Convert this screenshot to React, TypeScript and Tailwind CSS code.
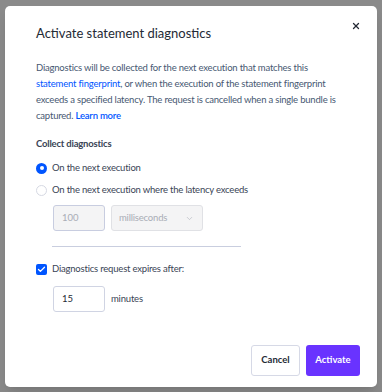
import { ChevronDown, X, Check } from "lucide-react";

export default function App() {
  return (
    <div
      className="w-[382px] h-[392px] bg-[#8a8a8a] pt-[6px] pl-[5px]"
      style={{ fontFamily: "Lato, 'Noto Sans', sans-serif" }}
    >
      <div className="relative w-[372px] h-[381px] bg-white rounded-[5px] shadow-lg pt-[18px] px-[31px] flex flex-col">
        {/* close */}
        <button className="absolute right-[16px] top-[15px] text-[#242a35]">
          <X size={10} strokeWidth={3} />
        </button>

        <h2 className="text-[13px] leading-[18px] text-[#242a35]">Activate statement diagnostics</h2>

        <p className="mt-[18px] text-[9.5px] tracking-[-0.2px] leading-[16px] text-[#475872]">
          Diagnostics will be collected for the next execution that matches this{" "}
          <span className="text-[#0055ff]">statement fingerprint</span>, or when the execution of the statement
          fingerprint exceeds a specified latency. The request is cancelled when a single bundle is captured.{" "}
          <span className="text-[#0055ff] font-semibold">Learn more</span>
        </p>

        <div className="mt-[12px] text-[9.5px] tracking-[-0.2px] leading-[16px] font-bold text-[#394455]">
          Collect diagnostics
        </div>

        <div className="mt-[8px] flex items-center gap-[5px] h-[16px]">
          <span className="w-[11px] h-[11px] rounded-full bg-[#0055ff] flex items-center justify-center">
            <span className="w-[4px] h-[4px] rounded-full bg-white" />
          </span>
          <span className="text-[9.5px] tracking-[-0.2px] text-[#394455]">On the next execution</span>
        </div>

        <div className="mt-[6px] flex items-center gap-[5px] h-[16px]">
          <span className="w-[11px] h-[11px] rounded-full border border-[#d6d9e3] bg-white" />
          <span className="text-[9.5px] tracking-[-0.2px] text-[#394455]">
            On the next execution where the latency exceeds
          </span>
        </div>

        <div className="ml-[17px] mt-[7px] flex gap-[6px]">
          <div className="w-[52px] h-[26px] rounded-[3px] border border-[#c8cde0] bg-[#f4f4f5] flex items-center px-[8px] text-[9.5px] text-[#a9adb5]">
            100
          </div>
          <div className="w-[92px] h-[26px] rounded-[3px] border border-[#e0e1e5] bg-[#f4f4f5] flex items-center justify-between pl-[7px] pr-[8px] text-[9.5px] tracking-[-0.2px] text-[#a9adb5]">
            <span>milliseconds</span>
            <ChevronDown size={9} strokeWidth={1.5} />
          </div>
        </div>

        <div className="ml-[16px] mt-[15px] w-[189px] h-px bg-[#c9cedf]" />

        <div className="mt-[14px] flex items-center gap-[5px] h-[16px]">
          <span className="w-[11px] h-[11px] rounded-[2px] bg-[#0055ff] flex items-center justify-center text-white">
            <Check size={9} strokeWidth={3.5} />
          </span>
          <span className="text-[9.5px] tracking-[-0.2px] text-[#394455]">Diagnostics request expires after:</span>
        </div>

        <div className="ml-[17px] mt-[9px] flex items-center gap-[6px]">
          <div className="w-[52px] h-[26px] rounded-[3px] border border-[#d0d4e3] bg-white flex items-center px-[8px] text-[9.5px] text-[#242a35]">
            15
          </div>
          <span className="text-[9.5px] tracking-[-0.2px] text-[#394455]">minutes</span>
        </div>

        <div className="mt-auto mb-[11px] flex justify-end gap-[6px] -mr-[14px]">
          <button className="w-[49px] h-[31px] rounded-[3px] border border-[#d6d9e6] bg-white text-[9.5px] font-bold text-[#242a35]">
            Cancel
          </button>
          <button className="w-[54px] h-[31px] rounded-[3px] bg-[#6933ff] text-[9.5px] font-bold text-white">
            Activate
          </button>
        </div>
      </div>
    </div>
  );
}
